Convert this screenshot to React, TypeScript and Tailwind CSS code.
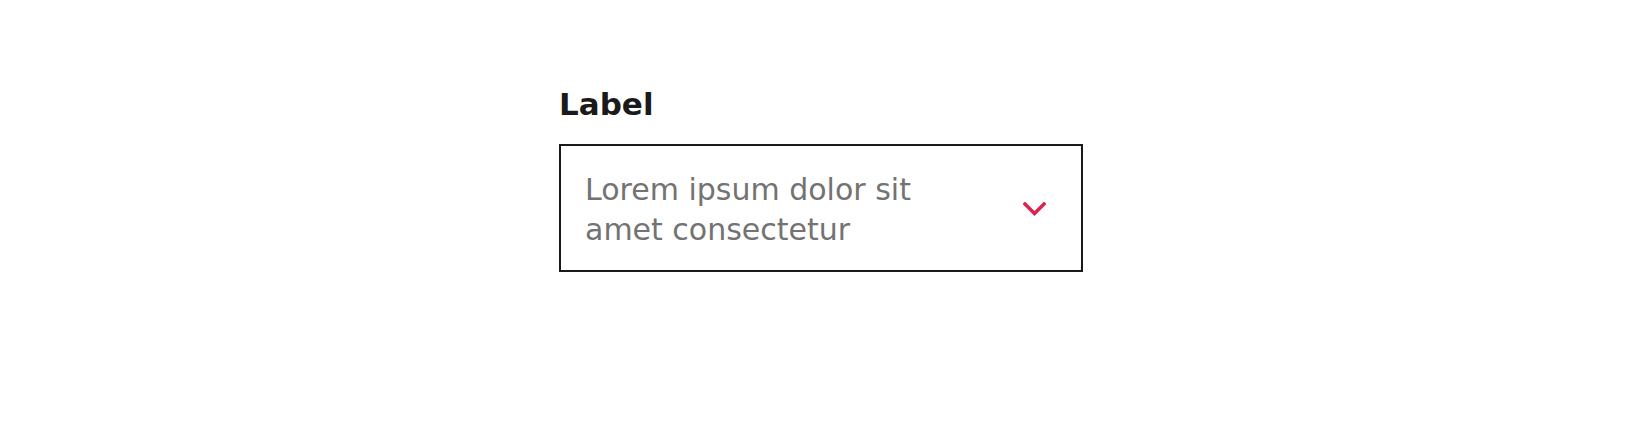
import React from "react";

export default function App() {
  return (
    <div className="min-h-[448px] w-full bg-white pt-[86px]">
      <div className="mx-auto w-[524px]">
        <label
          className="block text-[31px] leading-[36px] font-bold text-[#1a1a1a] mb-[22px]"
          style={{ fontFamily: '"DejaVu Sans", sans-serif' }}
        >
          Label
        </label>
        <div className="flex h-[128px] items-center border-2 border-[#1a1a1a] bg-white pl-6 pr-[35px]">
          <div
            className="max-w-[360px] flex-1 pt-[4px] text-[30px] leading-[40px] text-[#737373]"
            style={{ fontFamily: '"DejaVu Sans", sans-serif' }}
          >
            Lorem ipsum dolor sit amet consectetur
          </div>
          <div className="ml-auto flex items-center pt-[2px]">
            <svg width="23" height="14" viewBox="0 0 23 14" fill="none">
              <path
                d="M2 2 L11.5 11.5 L21 2"
                stroke="#dc2451"
                strokeWidth="3.5"
                strokeLinecap="square"
                strokeLinejoin="miter"
              />
            </svg>
          </div>
        </div>
      </div>
    </div>
  );
}
